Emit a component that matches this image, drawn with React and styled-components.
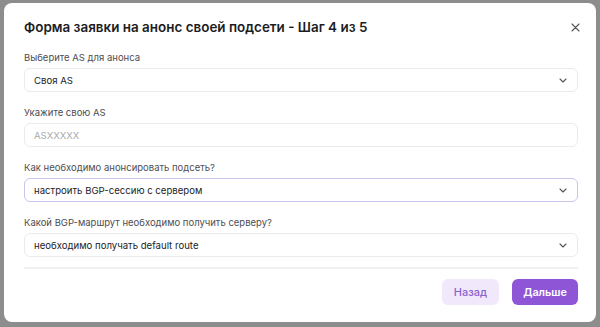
import React from "react";
import styled, { createGlobalStyle } from "styled-components";

const Global = createGlobalStyle`
  html, body { margin: 0; padding: 0; }
  body {
    background: #8d8d8d;
    font-family: Inter, "Noto Sans", sans-serif;
    width: 600px;
    height: 327px;
    overflow: hidden;
  }
`;

const Backdrop = styled.div`
  width: 600px;
  height: 327px;
  padding: 3px 4px 5px 4px;
  box-sizing: border-box;
`;

const Modal = styled.div`
  width: 592px;
  height: 319px;
  box-sizing: border-box;
  background: #ffffff;
  border-radius: 8px;
  padding: 0 18px 17px 20px;
  display: flex;
  flex-direction: column;
`;

const Header = styled.div`
  height: 48px;
  display: flex;
  align-items: center;
  justify-content: space-between;
`;

const Title = styled.h2`
  margin: 0;
  font-size: 13.45px;
  font-weight: 600;
  color: #1d1d1f;
`;

const CloseButton = styled.button`
  border: none;
  background: none;
  padding: 0;
  width: 16px;
  height: 16px;
  margin-right: -5px;
  display: flex;
  align-items: center;
  justify-content: center;
  color: #555;
  cursor: pointer;
`;

const Fields = styled.div`
  display: flex;
  flex-direction: column;
  gap: 14px;
`;

const Field = styled.div`
  display: flex;
  flex-direction: column;
  gap: 3px;
`;

const Label = styled.label`
  font-size: 9.5px;
  line-height: 14px;
  color: #4d4d52;
`;

const Control = styled.div`
  height: 24px;
  box-sizing: border-box;
  border: 1px solid ${(p) => (p.$focused ? "#cdc4ec" : "#ebebef")};
  border-radius: 6px;
  padding: 0 10px 0 9px;
  display: flex;
  align-items: center;
  justify-content: space-between;
  font-size: 9.6px;
  color: ${(p) => (p.$placeholder ? "#a9a9ae" : "#222226")};
`;

const Chevron = () => (
  <svg width="8" height="5" viewBox="0 0 8 5" fill="none">
    <path d="M1 1 L4 4 L7 1" stroke="#55555a" strokeWidth="1.1" strokeLinecap="round" strokeLinejoin="round" />
  </svg>
);

const Divider = styled.div`
  height: 2px;
  background: #f1f1f3;
  margin-top: 10px;
`;

const Footer = styled.div`
  margin-top: 10px;
  display: flex;
  justify-content: flex-end;
  gap: 13px;
`;

const Button = styled.button`
  height: 26px;
  border: none;
  border-radius: 6px;
  padding: 0;
  font-family: Inter, "Noto Sans", sans-serif;
  font-size: ${(p) => (p.$primary ? "10.8px" : "11px")};
  font-weight: ${(p) => (p.$primary ? 600 : 500)};
  background: ${(p) => (p.$primary ? "#8e56d6" : "#f1e8fb")};
  color: ${(p) => (p.$primary ? "#ffffff" : "#8a62cf")};
  width: ${(p) => (p.$primary ? "66px" : "57px")};
  cursor: pointer;
`;

const fields = [
  { label: "Выберите AS для анонса", value: "Своя AS", select: true },
  { label: "Укажите свою AS", value: "ASXXXXX", placeholder: true },
  { label: "Как необходимо анонсировать подсеть?", value: "настроить BGP-сессию с сервером", select: true, focused: true },
  { label: "Какой BGP-маршрут необходимо получить серверу?", value: "необходимо получать default route", select: true },
];

export default function App() {
  return (
    <>
      <Global />
      <Backdrop>
        <Modal>
          <Header>
            <Title>Форма заявки на анонс своей подсети - Шаг 4 из 5</Title>
            <CloseButton aria-label="Закрыть">
              <svg width="9" height="9" viewBox="0 0 9 9" fill="none">
                <path d="M1 1 L8 8 M8 1 L1 8" stroke="#555" strokeWidth="1.1" strokeLinecap="round" />
              </svg>
            </CloseButton>
          </Header>
          <Fields>
            {fields.map((f) => (
              <Field key={f.label}>
                <Label>{f.label}</Label>
                <Control $placeholder={f.placeholder} $focused={f.focused}>
                  <span>{f.value}</span>
                  {f.select && <Chevron />}
                </Control>
              </Field>
            ))}
          </Fields>
          <Divider />
          <Footer>
            <Button>Назад</Button>
            <Button $primary>Дальше</Button>
          </Footer>
        </Modal>
      </Backdrop>
    </>
  );
}
